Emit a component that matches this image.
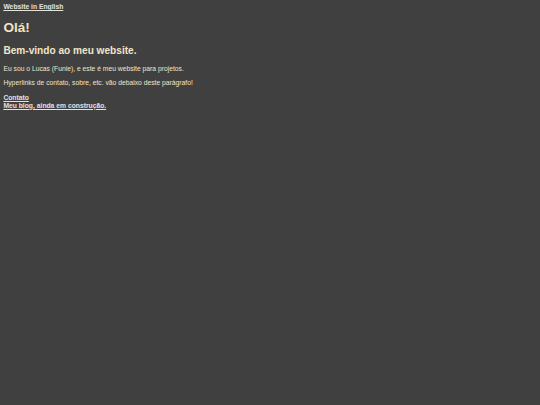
import React from 'react';

const links = [
  { label: 'Contato', href: '#contato' },
  { label: 'Meu blog, ainda em construção.', href: '#blog' },
];

const App: React.FC = () => {
  return (
    <div className="min-h-screen bg-[#404040] p-[3.375px] font-['Liberation_Sans',Arial,sans-serif] text-[#efe5c8]">
      {/* Language switch */}
      <div className="text-[6.75px] leading-[7.76px]">
        <a href="#en" className="font-bold text-[#e2e2e2] underline">Website in English</a>
      </div>

      <h1 className="mt-[9.05px] text-[13.5px] leading-[15.53px] font-bold">Olá!</h1>
      <h2 className="mt-[9.05px] text-[10.125px] leading-[11.64px] font-bold">Bem-vindo ao meu website.</h2>

      <p className="mt-[8.4px] text-[6.75px] leading-[7.76px]">
        Eu sou o Lucas (Funie), e este é meu website para projetos.
      </p>
      <p className="mt-[6.75px] text-[6.75px] leading-[7.76px]">
        Hyperlinks de contato, sobre, etc. vão debaixo deste parágrafo!
      </p>

      <div className="mt-[6.75px] text-[6.75px] leading-[7.76px]">
        {links.map(l => (
          <div key={l.href}>
            <a href={l.href} className="font-bold text-[#e2e2e2] underline">{l.label}</a>
          </div>
        ))}
      </div>
    </div>
  );
};

export default App;
